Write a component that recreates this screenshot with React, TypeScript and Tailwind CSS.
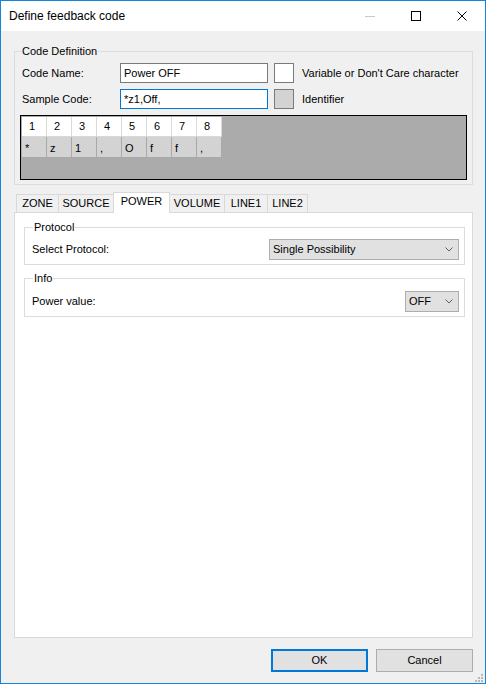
const headerCells = ['1', '2', '3', '4', '5', '6', '7', '8'];
const codeCells = ['*', 'z', '1', ',', 'O', 'f', 'f', ','];

interface TabDef {
  label: string;
  width: string;
  edges: string;
}

const tabs: TabDef[] = [
  { label: 'ZONE', width: 'w-[42px]', edges: 'border-l' },
  { label: 'SOURCE', width: 'w-[55px]', edges: 'border-l' },
  { label: 'POWER', width: 'w-[57px]', edges: 'border-x' },
  { label: 'VOLUME', width: 'w-[54px]', edges: '' },
  { label: 'LINE1', width: 'w-[43px]', edges: 'border-l' },
  { label: 'LINE2', width: 'w-[41px]', edges: 'border-x' },
];

function Combo({ value, width }: { value: string; width: string }) {
  return (
    <div
      className={`${width} h-[21px] flex items-center justify-between pl-[3px] pr-[5px] bg-[#e1e1e1] border border-[#adadad]`}
    >
      <span>{value}</span>
      <svg width="8" height="5" viewBox="0 0 8 5">
        <polyline points="0.5,0.5 4,4 7.5,0.5" fill="none" stroke="#606060" strokeWidth="1" />
      </svg>
    </div>
  );
}

function CaptionButtons() {
  return (
    <div className="flex h-full">
      <div className="w-[46px] h-full flex items-center justify-center">
        <div className="w-[10px] h-px bg-[#c8c8c8]" />
      </div>
      <div className="w-[46px] h-full flex items-center justify-center">
        <div className="w-[10px] h-[10px] border border-black" />
      </div>
      <div className="w-[46px] h-full flex items-center justify-center">
        <svg width="10" height="10" viewBox="0 0 10 10">
          <path d="M0.5 0.5 L9.5 9.5 M9.5 0.5 L0.5 9.5" stroke="#000" strokeWidth="1" />
        </svg>
      </div>
    </div>
  );
}

export default function App() {
  return (
    <div className="relative w-[486px] h-[684px] flex flex-col border border-[#1883d7] bg-[#f0f0f0] text-[11px] leading-[13px] text-black font-['Liberation_Sans',Arial,sans-serif]">
      {/* caption */}
      <div className="h-[30px] shrink-0 flex items-center justify-between bg-white">
        <span className="pl-[8px] text-[12px]">Define feedback code</span>
        <CaptionButtons />
      </div>

      {/* code definition */}
      <fieldset className="ml-[13px] mt-[14px] w-[458px] border border-[#dcdcdc] px-[5px] pb-[4px]">
        <legend className="ml-px px-px">Code Definition</legend>

        <div className="mt-[5px] flex items-center h-[20px]">
          <span className="w-[100px] pl-[2px]">Code Name:</span>
          <div className="w-[148px] h-[20px] flex items-center pl-[3px] bg-white border border-[#7a7a7a]">
            Power OFF
          </div>
          <div className="ml-[6px] w-[20px] h-[20px] bg-white border border-[#7a7a7a]" />
          <span className="ml-[8px]">Variable or Don't Care character</span>
        </div>

        <div className="mt-[6px] flex items-center h-[20px]">
          <span className="w-[100px] pl-[2px]">Sample Code:</span>
          <div className="w-[148px] h-[20px] flex items-center pl-[3px] bg-white border border-[#0078d7]">
            *z1,Off,
          </div>
          <div className="ml-[6px] w-[20px] h-[20px] bg-[#d3d3d3] border border-[#7a7a7a]" />
          <span className="ml-[8px]">Identifier</span>
        </div>

        <div className="mt-[6px] w-[447px] h-[65px] border border-black bg-[#ababab] p-px">
          <div className="flex">
            {headerCells.map((c, i) => (
              <div
                key={i}
                className="w-[25px] h-[20px] flex items-center pl-[7px] bg-white text-black border-r border-b border-[#d9d9d9]"
              >
                {c}
              </div>
            ))}
          </div>
          <div className="flex">
            {codeCells.map((c, i) => (
              <div
                key={i}
                className="w-[25px] h-[21px] flex items-center pl-[3px] pt-[2px] bg-[#d3d3d3] text-black border-r border-b border-[#a9a9a9]"
              >
                {c}
              </div>
            ))}
          </div>
        </div>
      </fieldset>

      {/* tab strip */}
      <div className="ml-[13px] mt-[7px] flex flex-col">
        <div className="ml-[2px] h-[20px] flex items-end">
          {tabs.map((t) =>
            t.label === 'POWER' ? (
              <div
                key={t.label}
                className={`${t.width} relative z-10 -mb-px h-[21px] flex justify-center pt-[2px] bg-white border-t border-[#d9d9d9] ${t.edges}`}
              >
                {t.label}
              </div>
            ) : (
              <div
                key={t.label}
                className={`${t.width} h-[18px] flex justify-center pt-[2px] border-t border-[#d9d9d9] ${t.edges}`}
              >
                {t.label}
              </div>
            )
          )}
        </div>

        <div className="w-[459px] h-[426px] bg-white border border-[#d9d9d9]">
          <fieldset className="ml-[9px] mt-[8px] w-[441px] border border-[#dcdcdc] pl-[7px] pr-[5px] pb-[4px]">
            <legend className="ml-px px-px">Protocol</legend>
            <div className="mt-[5px] flex items-center justify-between">
              <span>Select Protocol:</span>
              <Combo value="Single Possibility" width="w-[190px]" />
            </div>
          </fieldset>

          <fieldset className="ml-[9px] mt-[7px] w-[441px] border border-[#dcdcdc] pl-[7px] pr-[5px] pb-[4px]">
            <legend className="ml-px px-px">Info</legend>
            <div className="mt-[6px] flex items-center justify-between">
              <span>Power value:</span>
              <Combo value="OFF" width="w-[54px]" />
            </div>
          </fieldset>
        </div>
      </div>

      {/* dialog buttons */}
      <div className="mt-[11px] flex justify-end gap-[8px] pr-[12px]">
        <button className="w-[97px] h-[23px] bg-[#e1e1e1] border-2 border-[#0078d7]">OK</button>
        <button className="w-[97px] h-[23px] bg-[#e1e1e1] border border-[#adadad]">Cancel</button>
      </div>

      {/* size grip */}
      <svg className="absolute right-[2px] bottom-[1px]" width="8" height="8" viewBox="0 0 8 8">
        <g fill="#b8b8b8">
          <rect x="6" y="0" width="2" height="2" />
          <rect x="3" y="3" width="2" height="2" />
          <rect x="6" y="3" width="2" height="2" />
          <rect x="0" y="6" width="2" height="2" />
          <rect x="3" y="6" width="2" height="2" />
          <rect x="6" y="6" width="2" height="2" />
        </g>
      </svg>
    </div>
  );
}
